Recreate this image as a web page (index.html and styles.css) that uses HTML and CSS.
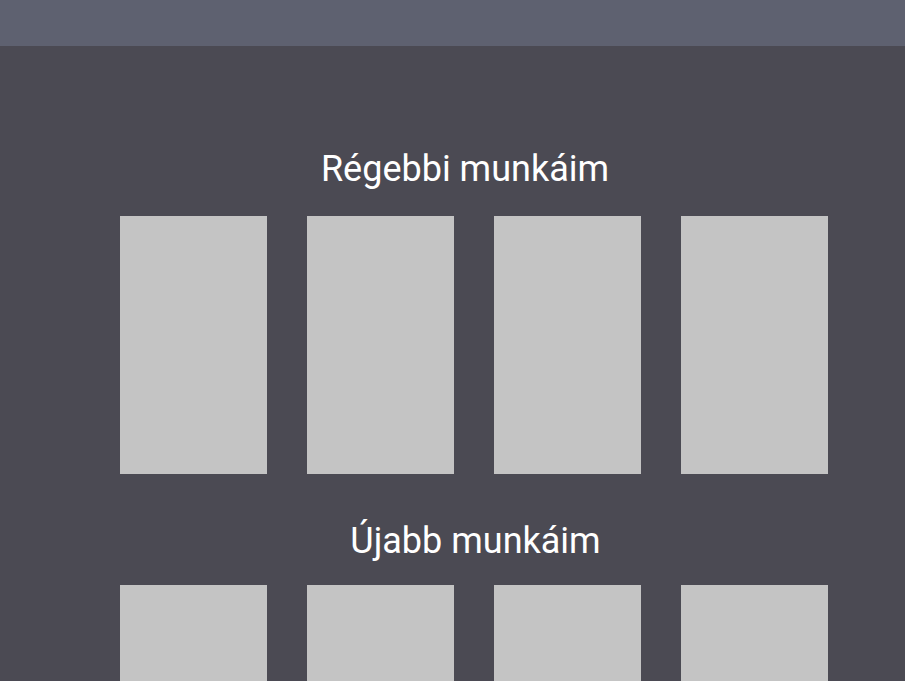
FILE: index.html
```html
<!DOCTYPE html>
<html lang="hu">

<head>
    <meta charset="UTF-8">
    <meta name="viewport" content="width=device-width, initial-scale=1.0">
    <title>Munkáim</title>
    <link rel="stylesheet" href="styles.css">
</head>

<body>
    <header class="topbar"></header>

    <main class="works">
        <section class="works-section older">
            <h2>Régebbi munkáim</h2>
            <div class="works-grid">
                <div class="work-card"></div>
                <div class="work-card"></div>
                <div class="work-card"></div>
                <div class="work-card"></div>
            </div>
        </section>

        <section class="works-section newer">
            <h2>Újabb munkáim</h2>
            <div class="works-grid">
                <div class="work-card"></div>
                <div class="work-card"></div>
                <div class="work-card"></div>
                <div class="work-card"></div>
            </div>
        </section>
    </main>
</body>

</html>
```

FILE: styles.css
```css
* {
    box-sizing: border-box;
    margin: 0;
    padding: 0;
    font-family: Roboto, "Liberation Sans", sans-serif;
}

body {
    background-color: #4b4a53;
    height: 100vh;
    overflow: hidden;
}

.topbar {
    height: 46px;
    background-color: #5e6170;
}

.works {
    padding: 103px 77px 0 120px;
}

.works-section h2 {
    color: #fff;
    font-size: 36px;
    font-weight: 400;
    line-height: 40px;
    text-align: center;
    margin-bottom: 27px;
}

.works-section.older h2 {
    padding-right: 18px;
}

.works-section.newer {
    margin-top: 47px;
}

.works-section.newer h2 {
    padding-left: 3px;
    margin-bottom: 24px;
}

.works-grid {
    display: flex;
    gap: 40px;
}

.work-card {
    width: 147px;
    height: 258px;
    background-color: #c4c4c4;
}
```
